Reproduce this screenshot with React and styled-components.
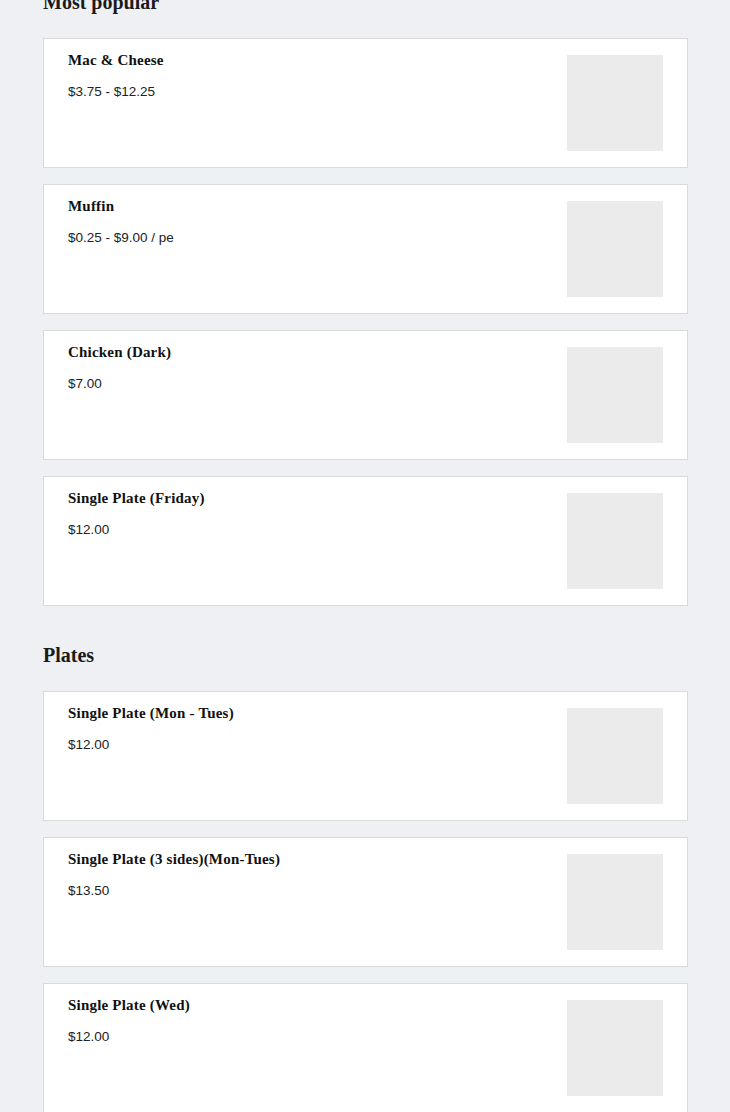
import React from "react";
import styled, { createGlobalStyle } from "styled-components";

const sections = [
  {
    title: "Most popular",
    items: [
      { name: "Mac & Cheese", price: "$3.75 - $12.25" },
      { name: "Muffin", price: "$0.25 - $9.00 / pe" },
      { name: "Chicken (Dark)", price: "$7.00" },
      { name: "Single Plate (Friday)", price: "$12.00" },
    ],
  },
  {
    title: "Plates",
    items: [
      { name: "Single Plate (Mon - Tues)", price: "$12.00" },
      { name: "Single Plate (3 sides)(Mon-Tues)", price: "$13.50" },
      { name: "Single Plate (Wed)", price: "$12.00" },
    ],
  },
];

const App = () => {
  return (
    <>
      <GlobalStyle />
      <Page>
        {sections.map((section) => (
          <Section key={section.title}>
            <Heading>{section.title}</Heading>
            <List>
              {section.items.map((item) => (
                <Card key={item.name}>
                  <Info>
                    <Title>{item.name}</Title>
                    <Price>{item.price}</Price>
                  </Info>
                  <Thumb />
                </Card>
              ))}
            </List>
          </Section>
        ))}
      </Page>
    </>
  );
};

export default App;

const GlobalStyle = createGlobalStyle`
  html, body {
    margin: 0;
    padding: 0;
    background: #eff0f3;
    overflow: hidden;
  }
`;

// page is scrolled a little: the first heading sits partly above the top edge
const Page = styled.div`
  margin-top: -12px;
  padding: 0 42px 0 43px;
  display: flex;
  flex-direction: column;
  gap: 35px;
`;

const Section = styled.section`
  display: flex;
  flex-direction: column;
  gap: 22px;
`;

const Heading = styled.h2`
  margin: 0;
  font-family: "Liberation Serif", serif;
  font-weight: 700;
  font-size: 20px;
  line-height: 28px;
  color: #1a1a1a;
`;

const List = styled.div`
  display: flex;
  flex-direction: column;
  gap: 16px;
`;

const Card = styled.div`
  display: flex;
  justify-content: space-between;
  align-items: flex-start;
  background: #fff;
  border: 1px solid #dadada;
  padding: 11px 24px 16px 24px;
`;

const Info = styled.div`
  display: flex;
  flex-direction: column;
  gap: 12px;
`;

const Title = styled.div`
  font-family: "Liberation Serif", serif;
  font-weight: 700;
  font-size: 15px;
  line-height: 20px;
  letter-spacing: 0.2px;
  color: #111;
`;

const Price = styled.div`
  font-family: "Liberation Sans", sans-serif;
  font-size: 13.5px;
  line-height: 20px;
  color: #222;
`;

const Thumb = styled.div`
  width: 96px;
  height: 96px;
  margin-top: 5px;
  background: #ebebeb;
  flex-shrink: 0;
`;
